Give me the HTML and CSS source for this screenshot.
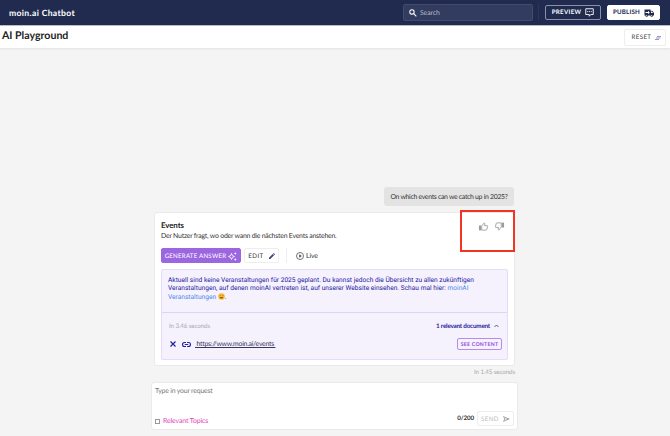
FILE: index.html
```html
<!DOCTYPE html>
<html lang="en">
<head>
    <meta charset="UTF-8">
    <meta name="viewport" content="width=device-width, initial-scale=1.0">
    <title>moin.ai Chatbot</title>
    <link rel="stylesheet" href="styles.css">
</head>
<body>
    <header class="topbar">
        <div class="brand">moin.ai Chatbot</div>
        <div class="search">
            <svg width="8" height="8" viewBox="0 0 18 18" fill="none" stroke="#fff" stroke-width="2.4"><circle cx="6.7" cy="6.7" r="4.9"/><path d="M10.5 10.5l6 6"/></svg>
            <span>Search</span>
        </div>
        <div class="top-divider"></div>
        <button class="btn btn-preview"><span>PREVIEW</span>
            <svg width="9" height="9" viewBox="0 0 18 18" fill="none" stroke="#fff" stroke-width="1.8"><path d="M1.500 1.500h15v11.500h-5L8.500 16.500V13h-7z"/><path d="M4.500 7.200h2M8 7.200h2M11.500 7.200h2"/></svg>
        </button>
        <button class="btn btn-publish"><span>PUBLISH</span>
            <svg width="10" height="8" viewBox="0 0 20 16" fill="#202b4f"><path d="M1 1h12v2.500h3.500L20 8v5h-2a2.600 2.600 0 0 1-5.200 0H8a2.600 2.600 0 0 1-5.200 0H1z"/><path d="M3 6h5V3.500L11.500 7 8 10.500V8H3z" fill="#fff"/><path d="M14 5h2l2 3h-4z" fill="#fff"/><circle cx="5.400" cy="13" r="1" fill="#fff"/><circle cx="15.400" cy="13" r="1" fill="#fff"/></svg>
        </button>
    </header>

    <div class="subbar">
        <h1>AI Playground</h1>
        <button class="btn btn-reset"><span>RESET</span>
            <svg width="6" height="4" viewBox="0 0 12 8" stroke="#7f87b5" stroke-width="1.700"><path d="M4 1h8M2 4h9M0 7h8"/></svg>
        </button>
    </div>

    <main class="playground">
        <div class="question">On which events can we catch up in 2025?</div>

        <section class="card">
            <div class="card-head">
                <div>
                    <h2>Events</h2>
                    <p class="description">Der Nutzer fragt, wo oder wann die nächsten Events anstehen.</p>
                </div>
                <div class="feedback">
                    <svg width="9" height="9" viewBox="0 0 20 18" fill="none" stroke="#858585" stroke-width="1.600"><path d="M1 7.500h2.500V17H1z" fill="#aaa"/><path d="M6 8l5-6.500c1.800-.4 2.400.8 2 2.300L12.300 7H18c1 0 1.300.8 1.100 1.600L17.300 15.500c-.3 1-.8 1.500-1.800 1.500H6z"/></svg>
                    <svg width="9" height="9" viewBox="0 0 20 18" fill="none" stroke="#858585" stroke-width="1.600"><g transform="rotate(180 10 9)"><path d="M1 7.500h2.500V17H1z" fill="#aaa"/><path d="M6 8l5-6.500c1.800-.4 2.400.8 2 2.300L12.300 7H18c1 0 1.300.8 1.100 1.600L17.300 15.500c-.3 1-.8 1.500-1.800 1.500H6z"/></g></svg>
                </div>
                <div class="highlight"></div>
            </div>

            <div class="actions">
                <button class="btn btn-generate"><span>GENERATE ANSWER</span>
                    <svg width="9" height="9" viewBox="0 0 18 18" fill="none" stroke="#fff" stroke-width="1.700"><path d="M7 3l1.800 4.200L13 9l-4.200 1.800L7 15l-1.800-4.200L1 9l4.200-1.800z"/><path d="M14.500 0l.8 2.200 2.200.8-2.200.8-.8 2.200-.8-2.200L11.500 3l2.200-.8zM14.500 12l.8 2.200 2.200.8-2.200.8-.8 2.200-.8-2.200-2.200-.8 2.200-.8z" fill="#fff" stroke="none"/></svg>
                </button>
                <button class="btn btn-edit"><span>EDIT</span>
                    <svg width="6" height="6" viewBox="0 0 12 12" fill="#36407a"><path d="M0 9.500L7.500 2 10 4.500 2.500 12H0zM8.200 1.300L9.500 0 12 2.500l-1.300 1.300z"/></svg>
                </button>
                <div class="action-divider"></div>
                <div class="live">
                    <svg width="8" height="8" viewBox="0 0 16 16" fill="none" stroke="#444" stroke-width="1.500"><circle cx="8" cy="8" r="7"/><path d="M6.500 4.700v6.600L11.500 8z" fill="#444" stroke="none"/></svg>
                    <span>Live</span>
                </div>
            </div>

            <div class="answer">
                <div class="answer-text">
                    Aktuell sind keine Veranstaltungen für 2025 geplant. Du kannst jedoch die Übersicht zu allen zukünftigen<br>
                    Veranstaltungen, auf denen moinAI vertreten ist, auf unserer Website einsehen. Schau mal hier: <a>moinAI</a><br>
                    <a>Veranstaltungen</a>
                    <svg class="emoji" width="7" height="7" viewBox="0 0 14 14"><circle cx="7" cy="7" r="6.500" fill="#f8b936"/><path d="M3.500 8h7c-.5 4-6.500 4-7 0z" fill="#945126"/><path d="M3 5.500q1.300-2 2.600 0M8.400 5.500q1.300-2 2.600 0" fill="none" stroke="#805027"/></svg>.
                </div>
                <div class="sources">
                    <div class="row sources-head">
                        <span class="timing">In 3.46 seconds</span>
                        <span class="documents">1 relevant document
                            <svg width="5" height="4" viewBox="0 0 10 8" fill="none" stroke="#454554" stroke-width="1.700"><path d="M1 6l4-4 4 4"/></svg>
                        </span>
                    </div>
                    <div class="row source">
                        <svg width="6" height="6" viewBox="0 0 12 12" stroke="#24209f" stroke-width="2.400"><path d="M1 1l10 10M11 1L1 11"/></svg>
                        <svg class="link-icon" width="9" height="5" viewBox="0 0 18 10" fill="none" stroke="#24209f" stroke-width="2.200"><path d="M8 1H5a4 4 0 0 0 0 8h3M10 1h3a4 4 0 0 1 0 8h-3M5.500 5h7"/></svg>
                        <a class="url">&nbsp;https://www.moin.ai/events&nbsp;</a>
                        <button class="btn btn-content">SEE CONTENT</button>
                    </div>
                </div>
            </div>
        </section>

        <div class="timing total">In 1.45 seconds</div>

        <section class="composer">
            <div class="placeholder">Type in your request</div>
            <div class="row composer-foot">
                <div class="checkbox"></div>
                <span class="topics">Relevant Topics</span>
                <span class="count">0/200</span>
                <button class="btn btn-send"><span>SEND</span>
                    <svg width="7" height="6" viewBox="0 0 14 12" fill="#999"><path d="M0 0l14 6-14 6 2.500-6zM2.500 2.500L4 5.300h5zM4 6.700L2.500 9.500 9 6.700z" fill-rule="evenodd"/></svg>
                </button>
            </div>
        </section>
    </main>
</body>
</html>
```
FILE: styles.css
```css
* {
    box-sizing: border-box;
}

body {
    margin: 0;
    height: 436px;
    overflow: hidden;
    background-color: #f4f4f4;
    font-family: 'Lato', sans-serif;
    font-size: 6.9px;
    letter-spacing: -0.1px;
    color: #333;
    text-rendering: geometricPrecision;
}

h1, h2, p {
    margin: 0;
}

svg {
    display: block;
    flex: none;
    overflow: visible;
}

.btn {
    display: flex;
    align-items: center;
    justify-content: center;
    flex: none;
    margin: 0;
    padding: 1px 0 0;
    border: 1px solid #eee;
    border-radius: 2px;
    background: #fff;
    font-family: 'Lato', sans-serif;
    font-size: 6.2px;
    text-rendering: geometricPrecision;
    white-space: nowrap;
}

.topbar {
    display: flex;
    align-items: center;
    height: 25px;
    padding: 0 10px 0 9px;
    background-color: #202b4f;
}

.brand {
    color: #fff;
    font-family: 'Lato', sans-serif;
    font-size: 8.6px;
    font-weight: 700;
    letter-spacing: 0.35px;
    white-space: nowrap;
}

.search {
    display: flex;
    align-items: center;
    gap: 3px;
    width: 130px;
    height: 17px;
    margin-left: auto;
    padding-left: 5px;
    border: 1px solid #414b6a;
    border-radius: 2px;
    background-color: #323c5e;
    color: #b6bbca;
}

.top-divider {
    width: 1px;
    height: 17px;
    margin: 0 6px 0 5px;
    background-color: #2b3658;
}

.btn-preview {
    gap: 4px;
    width: 56px;
    height: 15px;
    padding-top: 0;
    border-color: #8a91a6;
    background: none;
    color: #fff;
    font-weight: 700;
    letter-spacing: 0.3px;
}

.btn-publish {
    gap: 4px;
    width: 53px;
    height: 15px;
    padding-top: 0;
    margin-left: 6px;
    border-color: #fff;
    color: #202b4f;
    font-weight: 700;
    letter-spacing: 0.2px;
}

.subbar {
    display: flex;
    align-items: center;
    justify-content: space-between;
    height: 23px;
    padding: 0 4px 0 2px;
    border-top: 1px solid #b9bdca;
    background-color: #fff;
    box-shadow: 0 1px 2px rgba(0, 0, 0, 0.08);
}

h1 {
    margin-top: -2px;
    font-size: 10.6px;
    font-weight: 700;
    letter-spacing: 0;
    color: #222;
}

.btn-reset {
    gap: 4px;
    width: 42px;
    height: 17px;
    padding-left: 3px;
    color: #444;
    letter-spacing: 0.35px;
}

.playground {
    display: flex;
    flex-direction: column;
    width: 367px;
    margin-left: 151px;
    padding: 139px 0 0;
}

.question {
    align-self: flex-end;
    width: 130px;
    height: 19px;
    margin-right: 4px;
    border-radius: 3px;
    background-color: #e3e3e3;
    letter-spacing: -0.3px;
    line-height: 20px;
    text-align: center;
    white-space: nowrap;
}

.card {
    height: 154px;
    margin: 6px 3px 0 3px;
    padding: 0 6px;
    border: 1px solid #eaeaea;
    border-radius: 3px;
    background-color: #fff;
}

.card-head {
    position: relative;
    display: flex;
    justify-content: space-between;
    height: 35px;
    padding-top: 7px;
}

h2 {
    font-size: 7.9px;
    font-weight: 700;
    line-height: 11px;
    color: #222;
}

.description {
    letter-spacing: -0.22px;
    line-height: 10px;
    white-space: nowrap;
}

.feedback {
    display: flex;
    gap: 7px;
    padding: 2px 4px 0 0;
}

.highlight {
    position: absolute;
    top: -3px;
    right: -7px;
    width: 55px;
    height: 42px;
    border: 2px solid #f03522;
}

.actions {
    display: flex;
    align-items: center;
    height: 15px;
}

.btn-generate {
    gap: 2px;
    width: 80px;
    height: 15px;
    border-color: #9c66e0;
    background-color: #9c66e0;
    color: #fff;
    letter-spacing: 0.2px;
}

.btn-edit {
    gap: 5px;
    width: 35px;
    height: 15px;
    margin-left: 3px;
    color: #333;
    letter-spacing: 0.4px;
}

.action-divider {
    width: 1px;
    height: 15px;
    margin: 0 9px 0 7px;
    background-color: #eee;
}

.live {
    display: flex;
    align-items: center;
    gap: 2px;
}

.answer {
    height: 91px;
    margin-top: 6px;
    border: 1px solid #e4dcf8;
    border-radius: 2px;
    background-color: #f5f1fd;
}

.answer-text {
    height: 43px;
    padding: 7px 6px 0;
    border-bottom: 1px solid #ded5f5;
    color: #24209f;
    font-family: 'Roboto', sans-serif;
    font-size: 6.6px;
    letter-spacing: 0.01px;
    line-height: 7.8px;
    white-space: nowrap;
}

.answer-text a {
    color: #4889e8;
}

.emoji {
    display: inline-block;
    vertical-align: -1px;
}

.row {
    display: flex;
    align-items: center;
}

.sources {
    padding: 7px 5px 0 7px;
}

.sources-head {
    justify-content: space-between;
    height: 12px;
}

.timing {
    color: #aaa;
    font-size: 6.2px;
}

.documents {
    display: flex;
    align-items: center;
    gap: 4px;
    padding-right: 3px;
    color: #24209f;
    font-weight: 700;
    font-size: 6.3px;
    letter-spacing: -0.2px;
}

.source {
    height: 12px;
    margin-top: 6px;
    padding-left: 1px;
}

.link-icon {
    margin: 0 4px 0 6px;
}

.url {
    color: #36365b;
    letter-spacing: -0.26px;
    text-decoration: underline;
    white-space: nowrap;
}

.btn-content {
    width: 45px;
    height: 12px;
    margin-left: auto;
    border-color: #b58cea;
    background: none;
    color: #9250df;
    font-size: 5.2px;
    font-weight: 700;
    letter-spacing: 0.25px;
}

.total {
    height: 16px;
    padding-right: 3px;
    line-height: 13px;
    text-align: right;
}

.composer {
    height: 48px;
    padding: 4px 3px 0;
    border: 1px solid #eaeaea;
    border-radius: 3px;
    background-color: #fff;
}

.placeholder {
    height: 9px;
    letter-spacing: -0.2px;
    line-height: 9px;
    color: #777;
}

.composer-foot {
    height: 15px;
    margin-top: 15px;
}

.checkbox {
    width: 5px;
    height: 5px;
    margin: 5px 3px 0 0;
    border: 1px solid #999;
}

.topics {
    margin-top: 5px;
    color: #e540b8;
}

.count {
    margin-left: auto;
    margin-right: 3px;
    font-size: 6.2px;
    font-weight: 700;
}

.btn-send {
    gap: 4px;
    width: 37px;
    height: 15px;
    color: #bbb;
    letter-spacing: 0.35px;
}
```
